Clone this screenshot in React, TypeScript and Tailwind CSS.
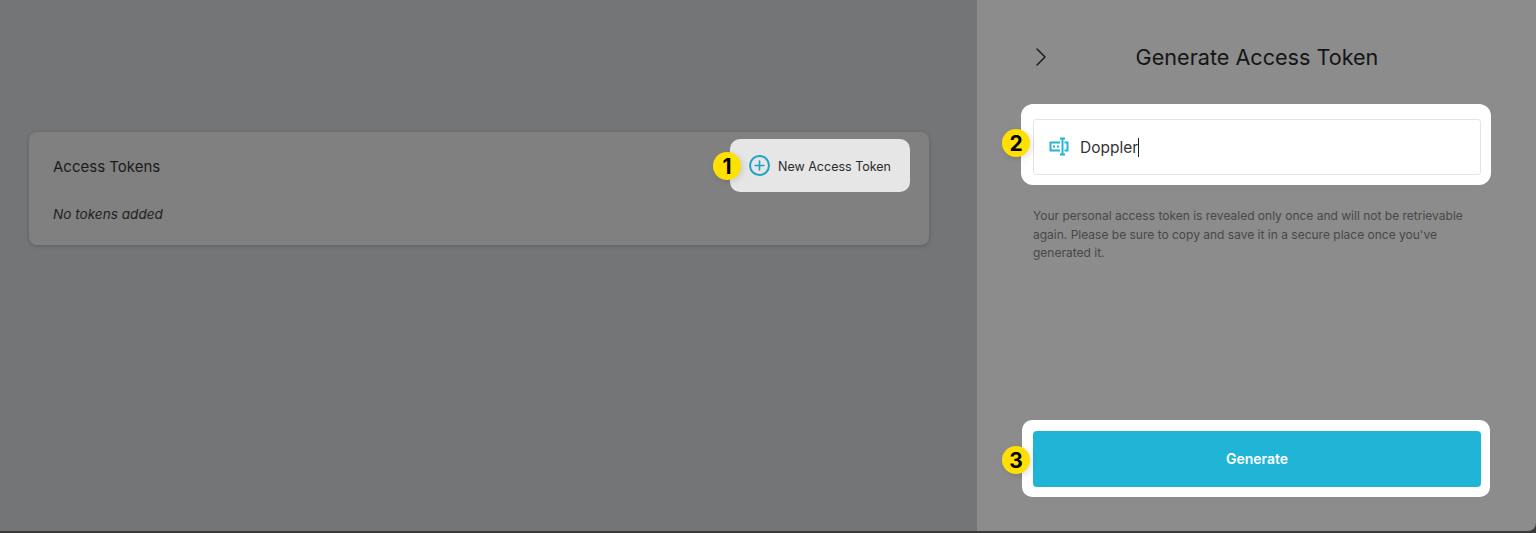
import { ChevronRight, Plus } from 'lucide-react';

function StepBadge({ n, className }: { n: number; className: string }) {
  return (
    <span
      className={`absolute flex h-[28px] w-[28px] items-center justify-center rounded-full bg-[#ffe000] text-[21px] font-bold leading-none text-black shadow-[2px_2px_6px_rgba(0,0,0,0.12)] ${className}`}
    >
      {n}
    </span>
  );
}

function TextCursorIcon() {
  return (
    <svg width="20" height="20" viewBox="0 0 20 20" fill="none" stroke="#22b5d6" strokeWidth="2">
      <path d="M11 5.5H1.5v8H11" />
      <path d="M15.5 5.5H18.5v8h-3" />
      <path d="M13.5 1.5v16M11 1.5h5M11 17.5h5" />
      <path d="M4 9.5h2M8 9.5h2" />
    </svg>
  );
}

export default function App() {
  return (
    <div className="relative flex h-[533px] w-full overflow-hidden bg-[#3a3a3a] font-['Inter',sans-serif]">
      <div className="flex h-[531px] w-full">
        <div className="w-[977px] bg-[#747577] pl-[29px] pt-[132px]">
          <div className="h-[113px] w-[900px] rounded-lg bg-[#808080] pl-6 pr-[19px] pt-[7px] shadow-[0_1px_4px_rgba(0,0,0,0.2)]">
            <div className="flex items-center justify-between">
              <h2 className="pt-[4px] text-[15px] text-[#1b1b1b]">Access Tokens</h2>
              <div className="relative">
                <StepBadge n={1} className="left-[-17px] top-[13px]" />
                <button className="flex h-[53px] w-[180px] items-center rounded-[10px] bg-[#e6e6e6] pl-[19px] text-[12.5px] text-[#2b2b2b]">
                  <span className="mr-[8px] flex h-[21px] w-[21px] items-center justify-center rounded-full border-2 border-[#1ea3c4]">
                    <Plus size={15} color="#1ea3c4" strokeWidth={2.6} />
                  </span>
                  <span className="pt-[4px]">New Access Token</span>
                </button>
              </div>
            </div>
            <p className="mt-[12px] text-[13.6px] italic text-[#1f1f1f]">No tokens added</p>
          </div>
        </div>

        <div className="flex flex-1 flex-col rounded-br-lg bg-[#8c8c8c] pl-[56px] pr-[55px]">
          <div className="relative mt-[43px] flex h-[28px] items-center justify-center">
            <ChevronRight size={32} color="#1b1b1b" strokeWidth={1.1} className="absolute left-[-8px]" />
            <h1 className="text-[21.6px] text-[#151515]">Generate Access Token</h1>
          </div>

          <div className="relative ml-[-12px] mr-[-10px] mt-[33px] rounded-[12px] bg-white pb-[10px] pl-[12px] pr-[10px] pt-[15px]">
            <StepBadge n={2} className="left-[-19px] top-[25px]" />
            <div className="flex h-[56px] items-center rounded-[3px] border border-[#e4e4e4] pl-[15px] text-[15.5px] text-[#333]">
              <TextCursorIcon />
              <span className="ml-[11px] pt-[1px]">Doppler</span>
              <span className="h-[19px] w-px bg-[#222]" />
            </div>
          </div>

          <p className="mt-[22px] text-[12px] leading-[18.5px] text-[#484848]">
            Your personal access token is revealed only once and will not be retrievable again. Please be sure to copy and save it in a secure place once you've generated it.
          </p>

          <div className="relative ml-[-11px] mr-[-9px] mt-[157.5px] rounded-[10px] bg-white pb-[10px] pl-[11px] pr-[9px] pt-[11px]">
            <StepBadge n={3} className="left-[-20px] top-[26px]" />
            <button className="flex h-[56px] w-full items-center justify-center rounded-[4px] bg-[#20b4d6] pb-[1px] text-[14px] font-semibold text-white">
              Generate
            </button>
          </div>
        </div>
      </div>
    </div>
  );
}
